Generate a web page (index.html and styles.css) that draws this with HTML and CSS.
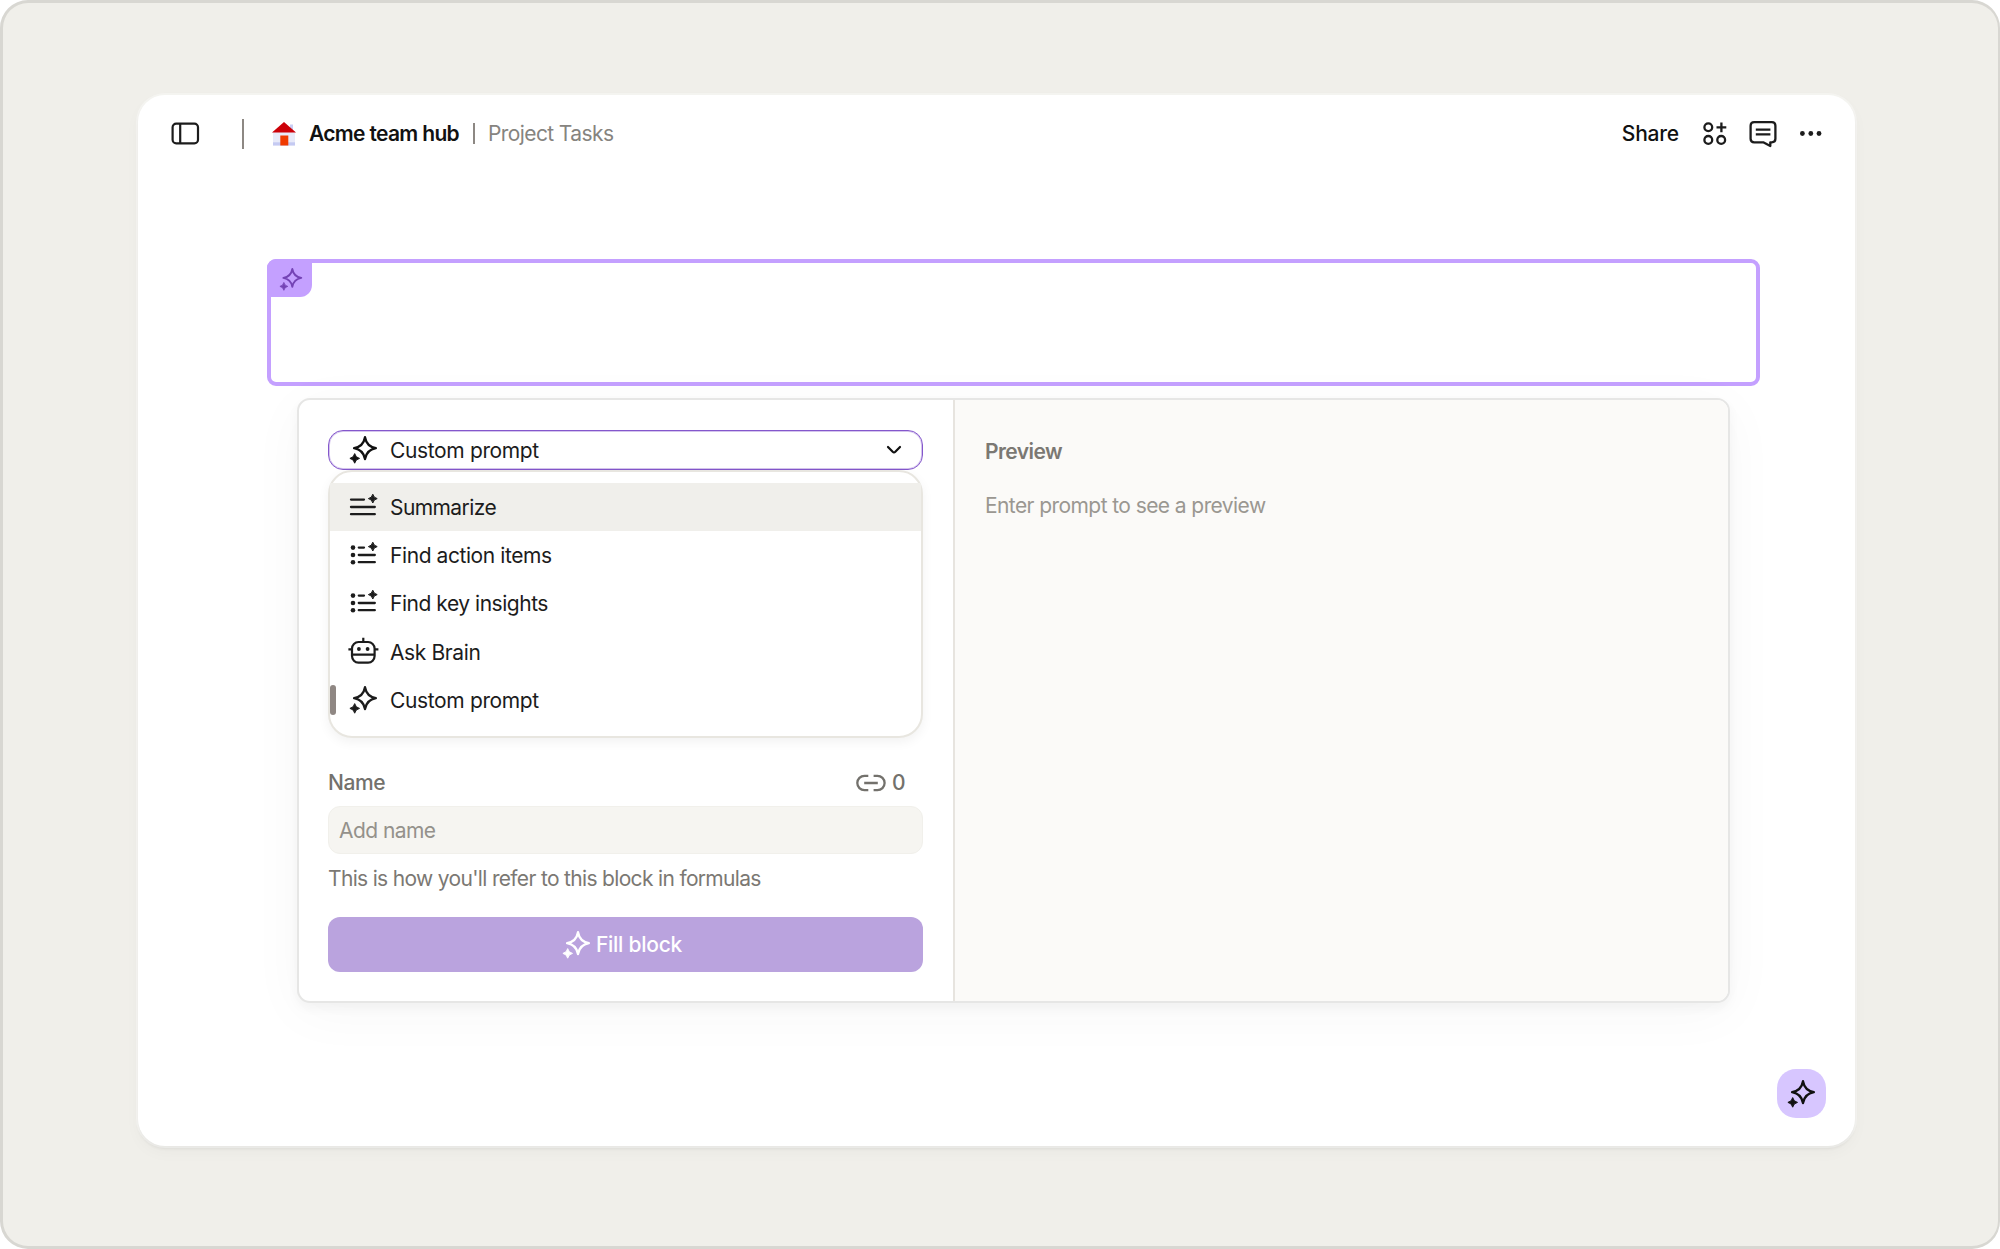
FILE: index.html
```html
<!DOCTYPE html>
<html lang="en">
<head>
<meta charset="utf-8">
<title>Project Tasks</title>
<link rel="stylesheet" href="styles.css">
</head>
<body>
<svg class="defs" width="0" height="0" aria-hidden="true">
  <symbol id="sparkle" viewBox="0 0 28 28">
    <path d="M15 1.2Q16.6 10.5 25.9 12.1Q16.6 13.7 15 23Q13.4 13.7 4.1 12.1Q13.4 10.5 15 1.2Z" fill="none" stroke="currentColor" stroke-width="2.3" stroke-linejoin="round"/>
    <path d="M4.7 17.6Q5.5 21.6 9.5 22.4Q5.5 23.2 4.7 27.2Q3.9 23.2 -.1 22.4Q3.9 21.6 4.7 17.6Z" fill="currentColor" stroke="currentColor" stroke-width="1" stroke-linejoin="round"/>
  </symbol>
  <symbol id="bullets" viewBox="0 0 28 28">
    <path d="M8.8 6.6H14M8.8 14H24.8M8.8 21.2H24.8" stroke="currentColor" stroke-width="2.3" stroke-linecap="round"/>
    <circle cx="3" cy="6.6" r="2.3" fill="currentColor"/><circle cx="3" cy="14" r="2.3" fill="currentColor"/><circle cx="3" cy="21.2" r="2.3" fill="currentColor"/>
    <path d="M22.8 1.2Q23.6 4.8 27.2 5.6Q23.6 6.4 22.8 10Q22 6.4 18.4 5.6Q22 4.8 22.8 1.2Z" fill="currentColor" stroke="currentColor" stroke-width="1" stroke-linejoin="round"/>
  </symbol>
</svg>
<div class="stage">
  <main class="window">
    <header class="topbar">
      <svg class="sidebar-icon" width="28" height="24" viewBox="0 0 28 24" fill="none" stroke="currentColor" stroke-width="2.2"><rect x="1.6" y="1.6" width="25.4" height="19.8" rx="3.6"/><path d="M9.2 1.6V21.4"/></svg>
      <span class="rule tall"></span>
      <svg class="house" width="24" height="24" viewBox="0 0 24 24"><rect x="18" y="2.5" width="3" height="8" fill="#c9cdf3"/><path d="M1 10L12 3L23 10V23.5H1Z" fill="#e8eaf9"/><path d="M1 20.3H23V23.5H1Z" fill="#c5caf2"/><path d="M12 0L24 10.5H0Z" fill="#cc0008"/><rect x="8.3" y="13.5" width="8" height="10" fill="#f03a00"/></svg>
      <span class="hub">Acme team hub</span>
      <span class="rule short"></span>
      <span class="page">Project Tasks</span>
      <span class="share">Share</span>
      <svg class="apps" width="26" height="26" viewBox="0 .5 26 26" fill="none" stroke="currentColor" stroke-width="2.3"><circle cx="6.3" cy="6.8" r="3.9"/><circle cx="6.3" cy="19.4" r="3.9"/><circle cx="19.2" cy="19.4" r="3.9"/><path d="M19.4 2V11.8M14.5 6.9H24.3"/></svg>
      <svg class="chat" width="28" height="28" viewBox="0 0 28 28" fill="none" stroke="currentColor" stroke-width="2.3" stroke-linejoin="round"><path d="M5.2 2.2H22.8Q26.4 2.2 26.4 5.8V18.8Q26.4 22.3 22.8 22.3H21.3V26L14.2 22.3H5.2Q1.6 22.3 1.6 18.8V5.8Q1.6 2.2 5.2 2.2Z"/><path d="M6.8 9.6H21.4M6.8 14.4H21.4"/></svg>
      <svg class="more" width="24" height="8" viewBox="0 .5 24 8" fill="currentColor"><circle cx="3.4" cy="4" r="2.4"/><circle cx="11.8" cy="4" r="2.4"/><circle cx="20" cy="4" r="2.4"/></svg>
    </header>

    <section class="block">
      <div class="block-tab"><svg width="23" height="23"><use href="#sparkle"/></svg></div>
    </section>

    <section class="panel">
      <div class="form">
        <div class="select">
          <svg width="28" height="28"><use href="#sparkle"/></svg>
          <span class="t-custom">Custom prompt</span>
          <svg class="chevron" width="16" height="10" viewBox="0 0 16 10" fill="none" stroke="currentColor" stroke-width="2.2" stroke-linecap="round" stroke-linejoin="round"><path d="M2 2L6.7 6.7Q8 7.9 9.3 6.7L14 2"/></svg>
        </div>
        <ul class="menu">
          <li class="item active">
            <svg width="28" height="28" viewBox="0 0 28 28"><path d="M1 6.6H14M1 14H24.8M1 21.2H24.8" stroke="currentColor" stroke-width="2.3" stroke-linecap="round"/><path d="M22.8 1.2Q23.6 4.8 27.2 5.6Q23.6 6.4 22.8 10Q22 6.4 18.4 5.6Q22 4.8 22.8 1.2Z" fill="currentColor" stroke="currentColor" stroke-width="1" stroke-linejoin="round"/></svg>
            <span class="t-summarize">Summarize</span>
          </li>
          <li class="item"><svg width="28" height="28"><use href="#bullets"/></svg><span class="t-action">Find action items</span></li>
          <li class="item"><svg width="28" height="28"><use href="#bullets"/></svg><span class="t-insights">Find key insights</span></li>
          <li class="item">
            <svg width="28" height="28" viewBox="0 .6 28 28" fill="none" stroke="currentColor" stroke-width="2.2"><rect x="2" y="4.6" width="22.6" height="20.6" rx="6.5"/><path d="M13.3 .4V4.6M-1.6 12H2M24.6 12H28.4M2 17.3H24.6"/><circle cx="8.9" cy="11.6" r="1.9" fill="currentColor" stroke="none"/><circle cx="17.6" cy="11.6" r="1.9" fill="currentColor" stroke="none"/></svg>
            <span class="t-ask">Ask Brain</span>
          </li>
          <li class="item selected"><svg width="28" height="28"><use href="#sparkle"/></svg><span class="t-custom">Custom prompt</span></li>
        </ul>
        <div class="name-row">
          <span class="label t-name">Name</span>
          <span class="links">
            <svg width="30" height="20" viewBox="0 0 30 20" fill="none" stroke="currentColor" stroke-width="2.3"><path d="M12.3 2.8H8.5A7.2 7.2 0 0 0 8.5 17.2H12.3M17.6 2.8H21.4A7.2 7.2 0 0 1 21.4 17.2H17.6M8.2 10H21.8"/></svg>
            <span>0</span>
          </span>
        </div>
        <div class="input">Add name</div>
        <p class="help">This is how you'll refer to this block in formulas</p>
        <div class="fill"><svg width="28" height="28"><use href="#sparkle"/></svg><span>Fill block</span></div>
      </div>
      <div class="preview">
        <h2>Preview</h2>
        <p>Enter prompt to see a preview</p>
      </div>
    </section>

    <div class="assistant"><svg width="28" height="28"><use href="#sparkle"/></svg></div>
  </main>
</div>
</body>
</html>
```
FILE: styles.css
```css
* { box-sizing: border-box; }
body {
  margin: 0;
  background: #fff;
  color: #1c1c1c;
  font: 400 21px/28px Inter, "Liberation Sans", sans-serif;
}
svg { display: block; flex: none; overflow: visible; }
symbol { overflow: visible; }
.defs { position: absolute; }
span, h2, p { white-space: nowrap; }

.stage {
  width: 2000px;
  height: 1249px;
  padding: 92px 143px 0 135px;
  border: 3px solid #d8d7d2;
  border-right-width: 2px;
  border-radius: 28px;
  background: #f0efea;
}
.window {
  display: flex;
  flex-direction: column;
  width: 1717px;
  height: 1051px;
  padding: 0 29px 28px 129px;
  border-radius: 27px;
  background: #fff;
  box-shadow: 0 0 0 2px rgba(255, 255, 255, .35), 0 3px 3px rgba(0, 0, 0, .06), 0 6px 16px rgba(0, 0, 0, .03);
}

.topbar {
  display: flex;
  align-items: center;
  height: 77px;
  margin-left: -96px;
}
.rule { width: 2px; background: #8d8883; }
.tall { height: 30px; margin: 0 28px 0 43px; }
.short { height: 21px; margin: 0 13px 0 14px; }
.house { margin-right: 13px; }
.hub { width: 150px; color: #111; font-weight: 600; letter-spacing: -.67px; }
.page { color: #86847f; letter-spacing: -.6px; }
.share { margin-left: auto; color: #111; font-weight: 500; letter-spacing: -.2px; }
.apps { margin-left: 23px; }
.chat { margin-left: 21px; }
.more { margin: 0 3px 0 22px; }

.block {
  width: 1493px;
  height: 127px;
  margin-top: 87px;
  border: 4px solid #c4a0ff;
  border-radius: 9px;
}
.block-tab {
  width: 45px;
  height: 38px;
  margin: -4px 0 0 -4px;
  padding: 9px 0 0 13px;
  border-radius: 9px 0 12px 0;
  background: #c4a0ff;
  color: #7443b5;
}

.panel {
  display: flex;
  width: 1433px;
  height: 605px;
  margin: 12px 0 0 30px;
  border: 2px solid #e6e6e5;
  border-radius: 13px;
  background: #fff;
  background-clip: padding-box;
  box-shadow: 0 5px 12px rgba(0, 0, 0, .04), 0 10px 55px rgba(0, 0, 0, .035);
}
.form {
  width: 656px;
  padding: 30px 30px 0 29px;
  border-right: 2px solid #e7e4df;
}
.select {
  display: flex;
  align-items: center;
  width: 595px;
  height: 40px;
  padding: 0 20px 0 21px;
  border: 1px solid #8457cc;
  border-radius: 15px;
  box-shadow: inset 0 0 0 1px rgba(132, 87, 204, .35);
}
.select .chevron { margin-left: auto; color: #111; }
.select span, .item span { margin-left: 12px; padding-top: 1px; }
.select svg { color: #111; }
.t-custom { letter-spacing: -.36px; }
.t-summarize { letter-spacing: -.58px; }
.t-action { letter-spacing: -.42px; }
.t-insights { letter-spacing: -.47px; }
.t-ask { letter-spacing: -.38px; }

.menu {
  width: 595px;
  height: 268px;
  margin: 0;
  padding: 11px 0 0;
  border: 2px solid #e8e6e0;
  border-radius: 24px;
  background: #fff;
  box-shadow: 0 4px 12px rgba(0, 0, 0, .055);
  list-style: none;
}
.item {
  display: flex;
  align-items: center;
  height: 48.2px;
  padding-left: 20px;
}
.item span { padding-top: 2px; }
.active { background: #f0efeb; }
.selected { padding-left: 0; }
.selected::before {
  content: "";
  width: 6px;
  height: 30px;
  margin-right: 14px;
  border-radius: 3px;
  background: #8f8783;
}

.name-row {
  display: flex;
  justify-content: space-between;
  margin-top: 31px;
  padding-right: 18px;
  color: #73716c;
  font-weight: 500;
}
.t-name { letter-spacing: -.4px; }
.links { display: flex; align-items: center; gap: 6px; }
.links span { width: 13px; letter-spacing: -.8px; }
.input {
  width: 595px;
  height: 48px;
  margin-top: 9px;
  padding: 10px 10px;
  border: 1px solid #f1f0eb;
  border-radius: 12px;
  background: #f6f5f1;
  color: #94918b;
  letter-spacing: -.55px;
}
.help {
  margin: 11px 0 0;
  color: #7b7873;
  letter-spacing: -.67px;
}
.fill {
  display: flex;
  align-items: center;
  justify-content: center;
  gap: 5px;
  width: 595px;
  height: 55px;
  margin-top: 24px;
  padding-right: 6px;
  border-radius: 12px;
  background: #baa3de;
  color: #fff;
  font-weight: 500;
  letter-spacing: -.25px;
}
.fill span { padding-top: 1px; }
.preview {
  flex: 1;
  padding: 38px 29px 0 30px;
  border-radius: 0 11px 11px 0;
  background: #fbfaf8;
}
.preview h2 {
  margin: 0;
  color: #7b7873;
  font-size: 21px;
  font-weight: 600;
  letter-spacing: -.55px;
}
.preview p { margin: 26px 0 0; color: #9a9791; letter-spacing: -.58px; }

.assistant {
  display: grid;
  place-items: center;
  align-self: flex-end;
  width: 49px;
  height: 49px;
  margin-top: auto;
  border-radius: 19px;
  background: #d7c6ff;
  color: #111;
}
```
